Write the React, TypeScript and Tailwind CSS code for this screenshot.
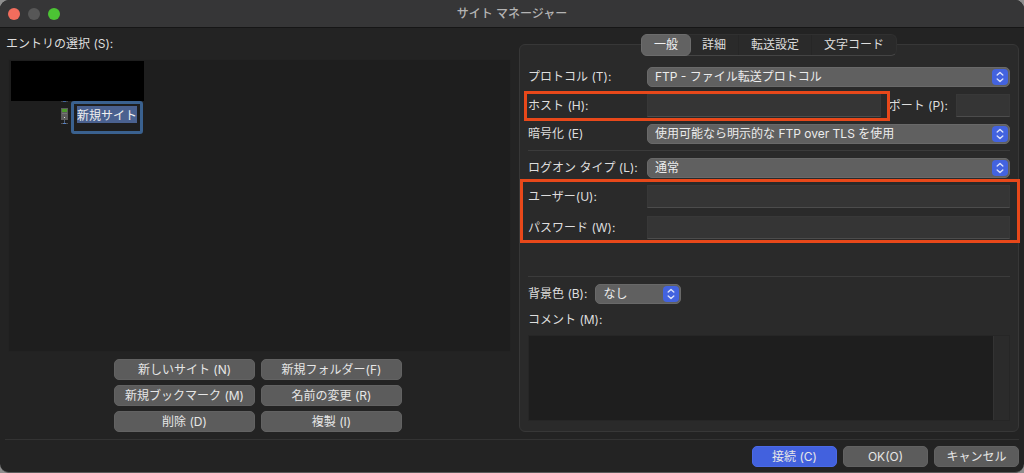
import { useState } from 'react';
import type { ReactNode } from 'react';

const TABS = ['一般', '詳細', '転送設定', '文字コード'];

const SITE_ACTIONS = [
  '新しいサイト (N)',
  '新規フォルダー(F)',
  '新規ブックマーク (M)',
  '名前の変更 (R)',
  '削除 (D)',
  '複製 (I)',
];

const FIELD =
  'h-[23px] min-w-0 border border-[#383838] border-b-[#4c4c4c] bg-[#353535] px-1 text-[#dedede] outline-none';

function TitleBar() {
  return (
    <header className="grid h-7 grid-cols-[1fr_auto_1fr] items-center border-b border-[#161616] bg-[#363637] px-2">
      <div className="flex gap-2">
        <button type="button" aria-label="閉じる" className="size-3 rounded-full bg-[#f26d5d]" />
        <button type="button" aria-label="しまう" className="size-3 rounded-full bg-[#575757]" />
        <button type="button" aria-label="拡大" className="size-3 rounded-full bg-[#4cc434]" />
      </div>
      <h1 className="font-medium text-[#b4b4b4]">サイト マネージャー</h1>
    </header>
  );
}

function ServerIcon() {
  return (
    <svg width="9" height="25" viewBox="0 0 9 25" aria-hidden="true">
      <path d="M1 .5h2M6 .5h2" stroke="#444" />
      <path d="M3 .5h3" stroke="#41649c" />
      <rect x="1" y="7" width="7" height="12" fill="#5c5c5c" />
      <rect x="2" y="8" width="5" height="3" fill="#4d9a2c" />
      <path d="M2 12.500h5" stroke="#747474" />
      <rect x="4" y="16" width="1" height="1" fill="#d8d8d8" />
      <path d="M4.500 19v3" stroke="#505f78" />
      <path d="M1 22.500h7" stroke="#555" />
      <path d="M3 22.500h3" stroke="#5580c4" />
    </svg>
  );
}

function SiteTree() {
  return (
    <section className="flex flex-col pt-2">
      <h2 className="pl-px">エントリの選択 (S):</h2>
      <div className="mt-[7px] ml-[3px] flex-1 border border-[#222] bg-[#1e1e1e] px-0.5 pt-px">
        <div className="h-10 w-[133px] bg-black" />
        <div className="flex items-start gap-0.5 pl-[49px]">
          <ServerIcon />
          <div className="h-[33px] w-[72px] rounded-[3px] border-3 border-[#3a618f] px-[3px] pt-0.5">
            <input
              aria-label="サイト名"
              defaultValue="新規サイト"
              className="block h-[17px] w-full bg-[#4a618f] text-[#f0f0f0] outline-none"
            />
          </div>
        </div>
      </div>
      <div className="mt-[7px] grid grid-cols-[141px_141px] justify-center gap-x-1.5 gap-y-[5px]">
        {SITE_ACTIONS.map((label) => (
          <button
            key={label}
            type="button"
            className="h-[21px] rounded-[5px] border border-[#626262] bg-[#5c5c5c] text-[#e6e6e6]"
          >
            {label}
          </button>
        ))}
      </div>
    </section>
  );
}

function Select({ id, value, className }: { id: string; value: string; className: string }) {
  return (
    <div className={`relative ${className}`}>
      <select
        id={id}
        className="block h-5 w-full appearance-none rounded-[5px] border border-[#696969] bg-[#606060] pl-[7px] text-[#ececec] outline-none"
      >
        <option>{value}</option>
      </select>
      <span className="pointer-events-none absolute top-0.5 right-0.5 flex size-4 items-center justify-center rounded-[4px] bg-[#4363df]">
        <svg width="16" height="16" viewBox="0 0 16 16" fill="none" aria-hidden="true">
          <path
            d="M5.200 6L8 3.400 10.800 6M5.200 10L8 12.600 10.800 10"
            stroke="#dbe2fb"
            strokeWidth="1.400"
            strokeLinecap="round"
            strokeLinejoin="round"
          />
        </svg>
      </span>
    </div>
  );
}

function Row({ id, label, children }: { id: string; label: string; children: ReactNode }) {
  return (
    <div className="flex min-w-0 flex-1 items-center">
      <label htmlFor={id} className="w-[119px] shrink-0 whitespace-nowrap">
        {label}
      </label>
      {children}
    </div>
  );
}

function SettingsPanel() {
  const [tab, setTab] = useState(TABS[0]);

  return (
    <section className="mt-4 flex flex-col rounded-md border border-[#373737] bg-[#2a2a2a] px-2 pb-2.5">
      <div
        role="tablist"
        className="-mt-[11px] flex h-[22px] self-center rounded-md border border-[#303030] border-b-[#444] bg-[#2a2a2a]"
      >
        {TABS.map((name) => (
          <button
            key={name}
            type="button"
            role="tab"
            aria-selected={name === tab}
            onClick={() => setTab(name)}
            className={
              name === tab
                ? '-m-px rounded-md border border-[#6c6c6c] bg-[#626262] px-3 text-[#f0f0f0]'
                : 'border-r border-[#262626] px-3 last:border-r-0'
            }
          >
            {name}
          </button>
        ))}
      </div>

      <div className="mt-[11px] flex flex-col gap-[7px]">
        <Row id="protocol" label="プロトコル (T):">
          <Select id="protocol" value="FTP - ファイル転送プロトコル" className="flex-1" />
        </Row>
        <div className="flex items-center gap-2">
          <div className="relative flex flex-1">
            <Row id="host" label="ホスト (H):">
              <input id="host" className={`${FIELD} flex-1`} />
            </Row>
            <div className="pointer-events-none absolute -top-[3px] -right-[9px] -bottom-1 -left-1 border-3 border-[#e8481a]" />
          </div>
          <label htmlFor="port">ポート (P):</label>
          <input id="port" className={`${FIELD} w-[54px]`} />
        </div>
        <Row id="encryption" label="暗号化 (E)">
          <Select id="encryption" value="使用可能なら明示的な FTP over TLS を使用" className="flex-1" />
        </Row>
      </div>

      <hr className="mt-1.5 border-[#3b3b3b]" />

      <div className="mt-[7px] flex flex-col gap-[7px]">
        <Row id="logon" label="ログオン タイプ (L):">
          <Select id="logon" value="通常" className="flex-1" />
        </Row>
        <div className="relative flex flex-col gap-2">
          <Row id="user" label="ユーザー(U):">
            <input id="user" className={`${FIELD} flex-1`} />
          </Row>
          <Row id="password" label="パスワード (W):">
            <input id="password" type="password" className={`${FIELD} flex-1`} />
          </Row>
          <div className="pointer-events-none absolute -top-[6px] -right-2.5 -bottom-1 -left-2 border-3 border-[#e8481a]" />
        </div>
      </div>

      <hr className="mt-[37px] border-[#3b3b3b]" />

      <div className="mt-[7px] flex items-center gap-2">
        <label htmlFor="color">背景色 (B):</label>
        <Select id="color" value="なし" className="w-[86px]" />
      </div>
      <label htmlFor="comment" className="mt-2">
        コメント (M):
      </label>
      <div className="mt-[7px] flex flex-1 border border-[#262626] bg-[#1e1e1e]">
        <textarea id="comment" className="min-h-20 flex-1 resize-none p-1 outline-none" />
        <div className="w-4 border-l border-[#333] bg-[#2b2b2b]" />
      </div>
    </section>
  );
}

function Footer() {
  const button = 'h-[21px] w-[85px] rounded-[5px] border';
  return (
    <footer className="mx-[5px] flex justify-end gap-1.5 border-t border-[#333] pt-1.5 pb-[5px] text-[#e6e6e6]">
      <button type="button" className={`${button} border-[#4b69e6] bg-[#4261de]`}>
        接続 (C)
      </button>
      <button type="button" className={`${button} border-[#626262] bg-[#5c5c5c]`}>
        OK(O)
      </button>
      <button type="button" className={`${button} border-[#626262] bg-[#5c5c5c]`}>
        キャンセル
      </button>
    </footer>
  );
}

export default function App() {
  return (
    <div className="flex min-h-screen bg-[#8e8e8e] font-['Inter','Noto_Sans_CJK_JP',sans-serif] text-[12px] leading-4 text-[#dedede]">
      <div className="flex flex-1 flex-col overflow-hidden rounded-[9px] border-b border-[#5a5a5a] bg-[#232323]">
        <TitleBar />
        <main className="grid flex-1 grid-cols-[506fr_500fr] gap-2 px-[5px] pb-[7px]">
          <SiteTree />
          <SettingsPanel />
        </main>
        <Footer />
      </div>
    </div>
  );
}
